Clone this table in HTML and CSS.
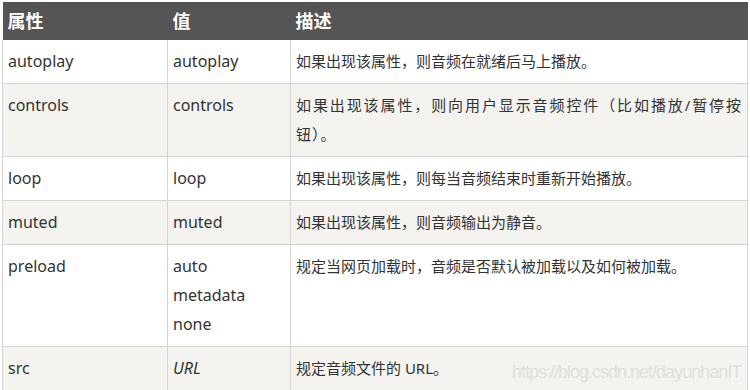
FILE: index.html
```html
<!DOCTYPE html>
<html lang="zh">
<head>
<meta charset="utf-8">
<title>audio 属性</title>
<link rel="stylesheet" href="styles.css">
</head>
<body>
<div class="wrap">
<table class="attrs">
  <colgroup>
    <col class="c1">
    <col class="c2">
    <col class="c3">
  </colgroup>
  <thead>
    <tr><th>属性</th><th>值</th><th>描述</th></tr>
  </thead>
  <tbody>
    <tr><td class="code">autoplay</td><td class="code">autoplay</td><td class="desc">如果出现该属性，则音频在就绪后马上播放。</td></tr>
    <tr class="alt"><td class="code">controls</td><td class="code">controls</td><td class="desc wide">如果出现该属性，则向用户显示音频控件（比如播放/暂停按钮）。</td></tr>
    <tr><td class="code">loop</td><td class="code">loop</td><td class="desc">如果出现该属性，则每当音频结束时重新开始播放。</td></tr>
    <tr class="alt"><td class="code">muted</td><td class="code">muted</td><td class="desc">如果出现该属性，则音频输出为静音。</td></tr>
    <tr><td class="code">preload</td><td class="code">auto<br>metadata<br>none</td><td class="desc">规定当网页加载时，音频是否默认被加载以及如何被加载。</td></tr>
    <tr class="alt"><td class="code">src</td><td class="code"><i>URL</i></td><td class="desc">规定音频文件的 URL。</td></tr>
  </tbody>
</table>
<span class="watermark">https://blog.csdn.net/dayunhanIT</span>
</div>
</body>
</html>
```
FILE: styles.css
```css
html, body {
  margin: 0;
  padding: 0;
  background: #ffffff;
}
body {
  padding: 2px 0 0 2px;
  font-family: "Noto Sans", "Noto Sans CJK SC", sans-serif;
  color: #333333;
}
.wrap {
  position: relative;
  width: 745px;
}
.attrs {
  width: 745px;
  table-layout: fixed;
  border-collapse: collapse;
  font-size: 15px;
  line-height: 29px;
}
.c1 { width: 165px; }
.c2 { width: 123px; }
.c3 { width: 457px; }
.attrs th {
  background: #555555;
  color: #ffffff;
  font-size: 18px;
  font-weight: bold;
  text-align: left;
  height: 38px;
  padding: 0 5px;
  line-height: 38px;
  border: none;
}
.attrs td {
  border: 1px solid #d4d4d4;
  padding: 7px 5px 7px 5px;
  vertical-align: top;
  text-align: justify;
}
.attrs td.code {
  font-size: 16px;
}
.attrs td.desc {
  font-size: 15px;
}
.attrs td.wide {
  letter-spacing: 1px;
}
.attrs tbody tr:first-child td {
  border-top: none;
}
.attrs tr.alt td {
  background: #f4f3f0;
}
.attrs i {
  font-style: italic;
}
.watermark {
  position: absolute;
  left: 510px;
  top: 356px;
  font-family: "Liberation Sans", Arial, sans-serif;
  font-size: 18px;
  line-height: 28px;
  letter-spacing: -1px;
  color: #e0dfdc;
  white-space: nowrap;
}
```
